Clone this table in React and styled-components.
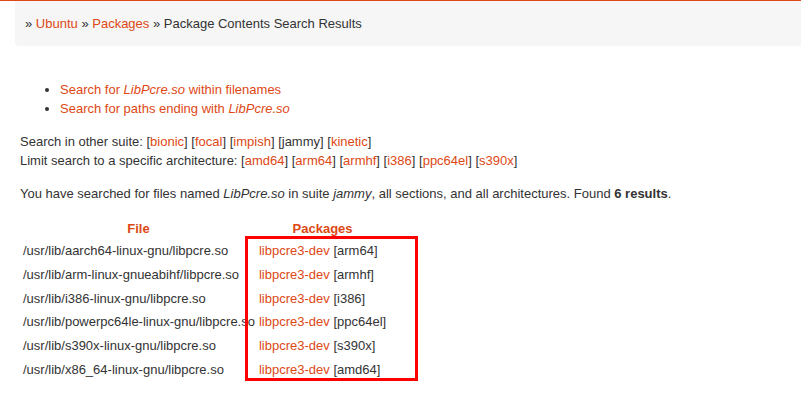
import React from 'react'
import styled, { createGlobalStyle } from 'styled-components'

const GlobalStyle = createGlobalStyle`
  html, body {
    margin: 0;
    padding: 0;
    background: #ffffff;
  }

  body {
    font-family: 'Liberation Sans', Arial, sans-serif;
    font-size: 13px;
    color: #333333;
    border-top: 1px solid #dd4814;
  }
`

const rows = [
  { file: '/usr/lib/aarch64-linux-gnu/libpcre.so', arch: 'arm64' },
  { file: '/usr/lib/arm-linux-gnueabihf/libpcre.so', arch: 'armhf' },
  { file: '/usr/lib/i386-linux-gnu/libpcre.so', arch: 'i386' },
  { file: '/usr/lib/powerpc64le-linux-gnu/libpcre.so', arch: 'ppc64el' },
  { file: '/usr/lib/s390x-linux-gnu/libpcre.so', arch: 's390x' },
  { file: '/usr/lib/x86_64-linux-gnu/libpcre.so', arch: 'amd64' },
]

const suites = ['bionic', 'focal', 'impish', 'jammy', 'kinetic']
const archs = ['amd64', 'arm64', 'armhf', 'i386', 'ppc64el', 's390x']

function App() {
  return (
    <Page>
      <GlobalStyle />
      <Breadcrumb>
        » <Link href="#">Ubuntu</Link> » <Link href="#">Packages</Link> » Package Contents Search Results
      </Breadcrumb>

      <Content>
        <SearchList>
          <li>
            <Link href="#">Search for <em>LibPcre.so</em> within filenames</Link>
          </li>
          <li>
            <Link href="#">Search for paths ending with <em>LibPcre.so</em></Link>
          </li>
        </SearchList>

        <Para $gap={14}>
          Search in other suite:{' '}
          {suites.map((s) => (
            <React.Fragment key={s}>
              [{s === 'jammy' ? s : <Link href="#">{s}</Link>}]{' '}
            </React.Fragment>
          ))}
          <br />
          Limit search to a specific architecture:{' '}
          {archs.map((a) => (
            <React.Fragment key={a}>
              [<Link href="#">{a}</Link>]{' '}
            </React.Fragment>
          ))}
        </Para>

        <Para $gap={14}>
          You have searched for files named <em>LibPcre.so</em> in suite <em>jammy</em>, all sections,
          and all architectures. Found <strong>6 results</strong>.
        </Para>

        <TableWrap>
          <Table>
            <thead>
              <tr>
                <Th>File</Th>
                <Th>Packages</Th>
              </tr>
            </thead>
            <tbody>
              {rows.map((r) => (
                <tr key={r.file}>
                  <FileCell>{r.file}</FileCell>
                  <PkgCell>
                    <Link href="#">libpcre3-dev</Link> [{r.arch}]
                  </PkgCell>
                </tr>
              ))}
            </tbody>
          </Table>
          <Highlight />
        </TableWrap>
      </Content>
    </Page>
  )
}

export default App

const Page = styled.div`
  width: 801px;
`

const Breadcrumb = styled.div`
  margin-left: 15px;
  height: 45px;
  background: #f6f6f6;
  border-bottom-left-radius: 4px;
  padding-left: 10px;
  display: flex;
  align-items: center;
  white-space: pre;
  color: #333333;
`

const Link = styled.a`
  color: #dd4814;
  text-decoration: none;
`

const Content = styled.div`
  padding: 0 20px;
`

const SearchList = styled.ul`
  margin: 34px 0 0;
  padding-left: 40px;
  line-height: 19px;
`

const Para = styled.p`
  margin: ${(p) => p.$gap}px 0 0;
  line-height: 19px;
`

const TableWrap = styled.div`
  position: relative;
  margin-top: 14px;
`

const Table = styled.table`
  border-collapse: collapse;
`

const Th = styled.th`
  color: #dd4814;
  font-weight: bold;
  text-align: center;
  padding: 2px 2px 1px;
  line-height: 19px;
`

const FileCell = styled.td`
  padding: 2px 2px 2px 3px;
  line-height: 19.8px;
`

const PkgCell = styled.td`
  padding: 2px 2px 2px 2px;
  line-height: 19.8px;
`

const Highlight = styled.div`
  position: absolute;
  left: 225px;
  top: 19px;
  width: 167px;
  height: 139px;
  border: 3px solid #ff0000;
`
